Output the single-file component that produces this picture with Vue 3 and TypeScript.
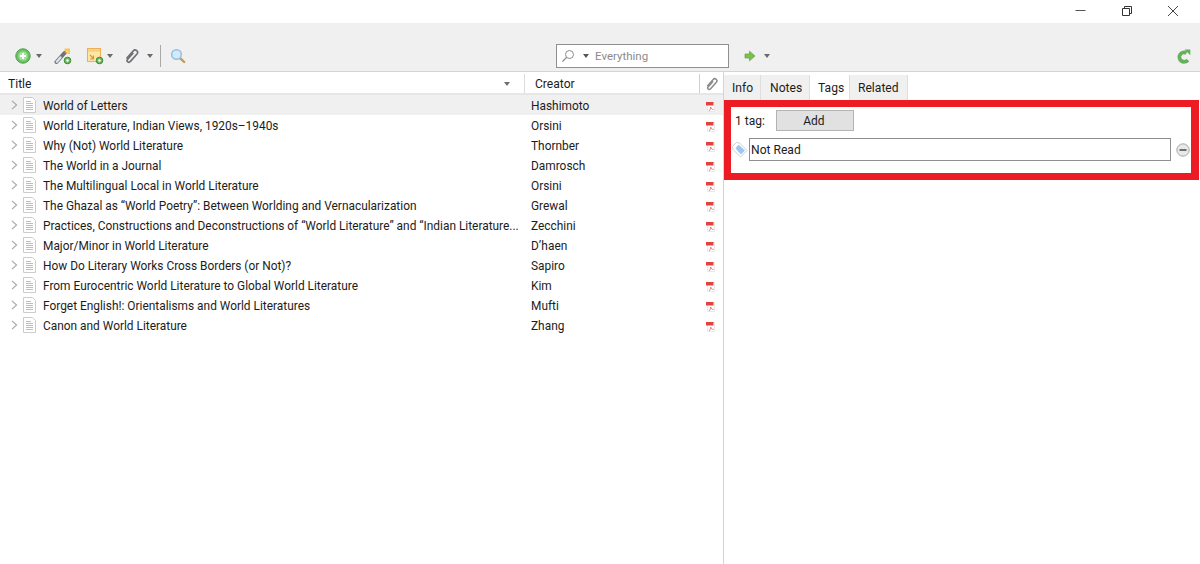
<script setup lang="ts">
interface Row { title: string; creator: string }
const rows: Row[] = [
  { title: 'World of Letters', creator: 'Hashimoto' },
  { title: 'World Literature, Indian Views, 1920s–1940s', creator: 'Orsini' },
  { title: 'Why (Not) World Literature', creator: 'Thornber' },
  { title: 'The World in a Journal', creator: 'Damrosch' },
  { title: 'The Multilingual Local in World Literature', creator: 'Orsini' },
  { title: 'The Ghazal as “World Poetry”: Between Worlding and Vernacularization', creator: 'Grewal' },
  { title: 'Practices, Constructions and Deconstructions of “World Literature” and “Indian Literature...', creator: 'Zecchini' },
  { title: 'Major/Minor in World Literature', creator: 'D’haen' },
  { title: 'How Do Literary Works Cross Borders (or Not)?', creator: 'Sapiro' },
  { title: 'From Eurocentric World Literature to Global World Literature', creator: 'Kim' },
  { title: 'Forget English!: Orientalisms and World Literatures', creator: 'Mufti' },
  { title: 'Canon and World Literature', creator: 'Zhang' },
]
</script>

<template>
  <div class="app">
    <div class="titlebar">
      <svg class="win" width="12" height="12" viewBox="0 0 12 12"><path d="M0.500 5.500h10" stroke="#555" fill="none" /></svg>
      <svg class="win" width="12" height="12" viewBox="0 0 12 12"><path d="M1.500 3.500h7v7h-7zM3.500 3.500v-2h7v7h-2" stroke="#333" fill="none" /></svg>
      <svg class="win" width="12" height="12" viewBox="0 0 12 12"><path d="M1 1l10 10M11 1L1 11" stroke="#444" fill="none" /></svg>
    </div>

    <div class="toolbar">
      <div class="tools">
        <svg class="tool" width="16" height="16" viewBox="0 0 16 16">
          <circle cx="8" cy="8" r="7.200" fill="#6cc266" stroke="#4a9e49" />
          <circle cx="8" cy="8" r="4.600" fill="#a4e09c" />
          <path d="M8 5v6M5 8h6" stroke="#fff" stroke-width="2" />
        </svg>
        <i class="caret first"></i>
        <svg class="tool wand" width="18" height="18" viewBox="0 0 18 18">
          <path d="M2.500 15L10.500 6" stroke="#6f7378" stroke-width="4" stroke-linecap="round" />
          <path d="M2.800 14.700L6.500 10.500" stroke="#d6e6f5" stroke-width="2.400" stroke-linecap="round" />
          <path d="M10.500 1.500h5.500v5.500h-2.500v-3h-3z" fill="#f6c65a" />
          <path d="M11 4.500l2 2" stroke="#e7a52f" stroke-width="1.500" />
          <circle cx="13.500" cy="13.500" r="3.300" fill="#6cba5e" stroke="#3f8a39" />
          <circle cx="13.500" cy="13.500" r="1.200" fill="#fff" />
        </svg>
        <svg class="tool note" width="18" height="18" viewBox="0 0 18 18">
          <rect x="1.500" y="1.500" width="13" height="13" fill="#fde6a8" stroke="#eeae55" />
          <path d="M2 3.500h12" stroke="#f6cf7c" stroke-width="2.400" />
          <path d="M4 8l3.500 3.500M4 12h3.500V8.500" stroke="#e0932f" stroke-width="1.200" fill="none" />
          <circle cx="13.500" cy="13.500" r="3.300" fill="#6cba5e" stroke="#3f8a39" />
          <circle cx="13.500" cy="13.500" r="1.200" fill="#fff" />
        </svg>
        <i class="caret"></i>
        <svg class="tool clip" width="16" height="16" viewBox="0 0 16 16">
          <path d="M2.500 10.500l6.800-7.600a2.400 2.400 0 0 1 3.700 3.100l-6.800 7.600a1.700 1.700 0 0 1-2.700-2.100l5.800-6.500" fill="none" stroke="#6f7174" stroke-width="1.700" />
        </svg>
        <i class="caret"></i>
        <span class="sep"></span>
        <svg class="tool lens" width="16" height="16" viewBox="0 0 16 16">
          <path d="M9.800 9.800l4.400 4.200" stroke="#c49a58" stroke-width="2.400" stroke-linecap="round" />
          <circle cx="6.500" cy="6.500" r="4.800" fill="#d5e9fa" stroke="#8fc0e6" stroke-width="1.500" />
        </svg>
      </div>
      <div class="search">
        <svg width="14" height="14" viewBox="0 0 14 14">
          <circle cx="8.500" cy="5.500" r="4" fill="none" stroke="#8a8a8a" />
          <path d="M5.600 8.400L1.500 12.500" stroke="#8a8a8a" stroke-width="1.200" />
        </svg>
        <i class="caret dark"></i>
        <span class="placeholder">Everything</span>
      </div>
      <div class="go">
        <svg width="12" height="12" viewBox="0 0 12 12">
          <path d="M1 4h4.500V1.200L11 6l-5.500 4.800V8H1z" fill="#7cc04a" stroke="#5ea434" stroke-width=".7" />
        </svg>
        <i class="caret go-caret"></i>
      </div>
      <svg class="sync" width="14" height="15" viewBox="0 0 14 15">
        <path d="M10.800 11A4.700 4.700 0 1 1 9.500 4" fill="none" stroke="#64b05e" stroke-width="3.800" />
        <path d="M7.500 .4h5.800v5.800z" fill="#64b05e" />
      </svg>
    </div>

    <div class="main">
      <section class="list">
        <div class="head">
          <div class="h-title">
            <span>Title</span>
            <i class="caret sort"></i>
          </div>
          <div class="h-creator">Creator</div>
          <div class="h-attach">
            <svg width="14" height="14" viewBox="0 0 16 16">
              <path d="M2.500 10.500l6.800-7.600a2.400 2.400 0 0 1 3.700 3.100l-6.800 7.600a1.700 1.700 0 0 1-2.700-2.100l5.800-6.500" fill="none" stroke="#8b8b8b" stroke-width="1.700" />
            </svg>
          </div>
        </div>
        <div v-for="(row, i) in rows" :key="row.title" class="row" :class="{ selected: i === 0 }">
          <svg class="twisty" width="7" height="10" viewBox="0 0 7 10"><path d="M1 .8L5.600 5 1 9.200" fill="none" stroke="#a6a6a6" stroke-width="1.100" /></svg>
          <svg class="doc" width="13" height="16" viewBox="0 0 13 16">
            <path d="M.5.500h9l3 3v12H.5z" fill="#fff" stroke="#cccccc" />
            <path d="M3 4.500h5M3 6.500h7M3 8.500h7M3 10.500h7M3 12.500h7" stroke="#bdbdbd" />
          </svg>
          <span class="title">{{ row.title }}</span>
          <span class="creator">{{ row.creator }}</span>
          <svg class="pdf" width="9" height="11" viewBox="0 0 9 11">
            <path d="M1.500 1.500h7v9h-7z" fill="#fff" stroke="#e8e8e8" />
            <path d="M0 1h7.500v3.500H0z" fill="#e2423d" />
            <path d="M3 10c1.200-1 1.700-2.300 1.600-4C5 7.500 6 8.400 7.600 8.500" fill="none" stroke="#ea7a74" stroke-width="1" />
          </svg>
        </div>
      </section>

      <section class="pane">
        <div class="tabs">
          <span class="tab info">Info</span>
          <span class="tab notes">Notes</span>
          <span class="tab active">Tags</span>
          <span class="tab">Related</span>
        </div>
        <div class="tags">
          <div class="tags-head">
            <span>1 tag:</span>
            <button class="add" type="button">Add</button>
          </div>
          <div class="tag-row">
            <svg class="tag-icon" width="16" height="16" viewBox="0 0 16 16">
              <path d="M0.500 4.500L4.500 .5l3 .5 7.500 7.500-6.500 6.500L1 7.500z" fill="#fff" stroke="#cfcfcf" />
              <path d="M4.800 4.500L6.800 2.800 13 8.500 9 12.500 3.500 6.500z" fill="#9cc8f0" />
            </svg>
            <div class="tag-input">Not Read</div>
            <svg class="minus" width="14" height="14" viewBox="0 0 14 14">
              <circle cx="7" cy="7" r="6.200" fill="#e8e8e8" stroke="#a8a8a8" />
              <path d="M3.500 7h7" stroke="#6f6f6f" stroke-width="2" />
            </svg>
          </div>
        </div>
      </section>
    </div>
  </div>
</template>

<style>
html, body { margin: 0; background: #fff; }
</style>

<style scoped>
.app {
  width: 1200px;
  height: 564px;
  overflow: hidden;
  display: flex;
  flex-direction: column;
  font-family: Roboto, "Open Sans", sans-serif;
  font-size: 12px;
  color: #1c1c1c;
  background: #fff;
}
.titlebar {
  height: 23px;
  flex: none;
  display: flex;
  justify-content: flex-end;
  align-items: flex-start;
  gap: 34px;
  padding: 5px 21px 0 0;
  box-sizing: border-box;
}
.win { display: block; }
.toolbar {
  height: 49px;
  flex: none;
  box-sizing: border-box;
  background: #f0f0f0;
  border-bottom: 1px solid #d4d4d4;
  display: flex;
  align-items: flex-start;
  padding: 21px 9px 0 15px;
}
.tools { display: flex; align-items: center; width: 541px; height: 24px; }
.tool { display: block; flex: none; }
.caret {
  display: block;
  flex: none;
  width: 0;
  height: 0;
  border-left: 3.500px solid transparent;
  border-right: 3.500px solid transparent;
  border-top: 4px solid #6a6a6a;
}
.first { margin-left: 5px; }
.wand { margin-left: 12px; }
.note { margin-left: 14px; }
.note + .caret { margin-left: 3px; }
.clip { margin-left: 11px; }
.clip + .caret { margin-left: 7px; }
.sep { width: 1px; height: 22px; background: #a8a8a8; margin-left: 7px; }
.lens { margin-left: 9px; }
.search {
  width: 173px;
  height: 24px;
  box-sizing: border-box;
  flex: none;
  background: #fff;
  border: 1px solid #8f8f8f;
  display: flex;
  align-items: center;
  padding-left: 4px;
}
.caret.dark { margin-left: 8px; border-top-color: #555; }
.placeholder { margin-left: 6px; color: #8b8b8b; font-size: 11.500px; }
.go { display: flex; align-items: center; gap: 8px; margin-left: 15px; height: 24px; }
.go-caret { width: 0; }
.sync { margin-left: auto; margin-top: 5px; }
.main { flex: 1; display: flex; min-height: 0; }
.list { width: 724px; flex: none; box-sizing: border-box; border-right: 1px solid #d4d4d4; }
.head {
  height: 23px;
  box-sizing: border-box;
  display: flex;
  align-items: center;
  border-bottom: 2px solid #e6e6e6;
  font-size: 12.100px;
  padding-top: 2px;
}
.h-title {
  width: 525px;
  height: 100%;
  flex: none;
  box-sizing: border-box;
  padding: 0 14px 0 8px;
  display: flex;
  align-items: center;
  justify-content: space-between;
  border-right: 1px solid #dcdcdc;
}
.sort { border-top-color: #6f6f6f; }
.h-creator { flex: 1; padding-left: 10px; height: 100%; display: flex; align-items: center; }
.h-attach {
  width: 24px;
  height: 100%;
  flex: none;
  box-sizing: border-box;
  border-left: 1px solid #cfcfcf;
  display: flex;
  align-items: center;
  justify-content: center;
}
.row { height: 20px; display: flex; align-items: center; font-size: 11.900px; }
.row.selected { background: #f0f0f0; }
.twisty { margin-left: 11px; flex: none; }
.doc { margin-left: 5px; flex: none; }
.title {
  margin-left: 7px;
  width: 488px;
  flex: none;
  white-space: nowrap;
  overflow: hidden;
  padding-top: 1px;
}
.creator { flex: 1; padding-top: 1px; }
.pdf { flex: none; margin-right: 8px; margin-top: 2px; }
.pane { flex: 1; min-width: 0; }
.tabs { display: flex; height: 28px; padding-top: 3px; box-sizing: border-box; font-size: 12.100px; }
.tab {
  background: #f0f0f0;
  border-right: 1px solid #dedede;
  padding: 6px 8px 0;
  box-sizing: border-box;
  height: 25px;
}
.tab.info { width: 37px; padding-left: 8px; }
.tab.notes { width: 49px; padding-left: 9px; }
.tab.active { background: #fff; width: 40px; }
.tags {
  height: 80px;
  box-sizing: border-box;
  margin-right: 1px;
  border: 7px solid #ed1c24;
  border-right-width: 8px;
  padding: 3px 0 0 4px;
}
.tags-head { display: flex; align-items: center; gap: 11px; height: 21px; }
.add {
  width: 78px;
  height: 21px;
  padding: 0 2px 0 0;
  font: inherit;
  color: inherit;
  background: #e1e1e1;
  border: 1px solid #b4b4b4;
}
.tag-row { display: flex; align-items: center; margin-top: 7px; margin-left: -4px; }
.tag-icon { flex: none; margin-left: 1px; }
.tag-input {
  flex: 1;
  height: 23px;
  line-height: 23px;
  box-sizing: border-box;
  margin-left: 1px;
  padding-left: 1px;
  border: 1px solid #8f8f8f;
  font-size: 12.100px;
}
.minus { flex: none; margin: 0 1px 0 5px; }
</style>
